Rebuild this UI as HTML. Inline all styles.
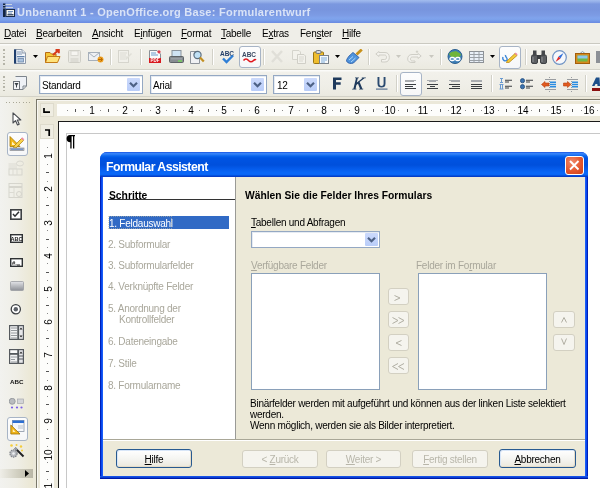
<!DOCTYPE html>
<html><head><meta charset="utf-8">
<style>
*{box-sizing:border-box}
html,body{margin:0;padding:0}
body{width:600px;height:488px;position:relative;overflow:hidden;will-change:transform;background:#fff;font-family:"Liberation Sans",sans-serif;font-size:9.5px;color:#000}
.a{position:absolute}
#title{left:0;top:0;width:600px;height:23px;background:linear-gradient(#a3bcee 0px,#92ade8 2px,#7b98df 4px,#7895de 10px,#7c9be4 15px,#80a3ec 18px,#7aa0ea 20px,#6d8fe4 22px,#6a8ae0 23px)}
#title .t{left:17px;top:6px;font-weight:bold;font-size:11px;color:#d9e3f7;white-space:nowrap;letter-spacing:0.27px}
#menu{left:0;top:23px;width:600px;height:21px;background:#efeee8;border-bottom:1px solid #cac9c1}
#menu span{position:absolute;top:5px;white-space:nowrap;font-size:10px;letter-spacing:-0.25px;color:#000}
u{text-decoration:underline;text-decoration-thickness:1px;text-underline-offset:1px}
.tb{background:linear-gradient(#fbfbf9 0px,#fbfbf9 1px,#f2f1eb 2px,#efeee7 60%,#ebeae0 calc(100% - 1px),#d3d2c8 calc(100% - 1px))}
#tb1{left:0;top:44px;width:600px;height:26px}
#tb2{left:0;top:70px;width:600px;height:27px}
.grip{position:absolute;left:3px;width:2px;background:repeating-linear-gradient(#b5b4a8 0 1.5px,transparent 1.5px 3.5px)}
.sep{position:absolute;width:2px;background:linear-gradient(90deg,#d2d1c8 0 1px,#fff 1px 2px)}
.combo{position:absolute;background:#fff;border:1px solid #94a8c3;box-shadow:inset 1px 1px #e6ebf2}
.combo .dd{position:absolute;right:2px;top:2px;width:13px;height:13px;background:linear-gradient(#cbd9fb,#b9cdf9);border-radius:1px}
.combo .dd svg{position:absolute;left:0;top:0}
#lefttb{left:0;top:97px;width:34px;height:391px;background:linear-gradient(90deg,#f2f2ef,#efeee6 50%,#ebe7d2)}
.rul i,.rul b{position:absolute;display:block}
.rul b{font-weight:normal;font-size:10px;text-align:center;line-height:10px}
.rul b.vr{transform:rotate(-90deg)}
.rul b{will-change:transform}

.dt{font-weight:bold;font-size:12.3px;letter-spacing:-0.55px;color:#fff;white-space:nowrap}
.b1{font-weight:bold;font-size:10.3px;white-space:nowrap}
.st{font-size:10px;letter-spacing:-0.25px;white-space:nowrap;line-height:11px}
.dis{color:#a9a79b}

.lb{background:#fff;border:1px solid #8aa0b9}
.btn{font-size:10px;letter-spacing:-0.25px;text-align:center;line-height:16px;border:1px solid #285a90;border-radius:3px;background:linear-gradient(#fff,#f4f4f0 55%,#ebe8dc);box-shadow:inset 1px 1px #d8e6f8,inset -1px -1px #e6dcc8;white-space:nowrap;padding-top:2px}
.dbtn{border-color:#d3d0c2;background:#f5f4ee;color:#b8b6aa;line-height:15px;box-shadow:none;padding-top:1px}


.pressed{border:1px solid #a7b4c6;border-radius:3px;background:linear-gradient(#fdfdfd,#f6f7f8)}
.ct{font-size:10px;letter-spacing:-0.25px;white-space:nowrap}
</style></head><body>

<div id="title" class="a">
  <svg class="a" style="left:3px;top:3px" width="12" height="14" viewBox="0 0 12 14">
    <rect x="0" y="0.5" width="2.5" height="13.5" fill="#13243f"/>
    <rect x="0" y="2" width="2.5" height="1" fill="#8fa3c8"/>
    <rect x="0" y="4.5" width="2.5" height="1" fill="#8fa3c8"/>
    <path d="M2.5 1.5H9M2.5 4.5H10" stroke="#c9d3e0" stroke-width="1.2"/>
    <rect x="2.5" y="6" width="9.5" height="8" fill="#1a2c4a"/>
    <rect x="3.5" y="7" width="7.5" height="6" fill="#f6f7f2"/>
    <rect x="5" y="8" width="5" height="1" fill="#6f8fbf"/>
    <rect x="5" y="9.6" width="4" height="1" fill="#6f8fbf"/>
    <rect x="4.5" y="11.2" width="6" height="1.2" fill="#1a2c4a"/>
  </svg>
  <div class="t a">Unbenannt 1 - OpenOffice.org Base: Formularentwurf</div>
</div>
<div id="menu" class="a">
  <span style="left:4px"><u>D</u>atei</span>
  <span style="left:36px"><u>B</u>earbeiten</span>
  <span style="left:92px"><u>A</u>nsicht</span>
  <span style="left:134px">E<u>i</u>nfügen</span>
  <span style="left:181px"><u>F</u>ormat</span>
  <span style="left:221px"><u>T</u>abelle</span>
  <span style="left:262px">E<u>x</u>tras</span>
  <span style="left:300px">Fen<u>s</u>ter</span>
  <span style="left:342px"><u>H</u>ilfe</span>
</div>
<div id="tb1" class="a tb">
  <div class="grip" style="top:5px;height:16px"></div>
  <!-- new -->
  <svg class="a" style="left:13px;top:5px" width="14" height="15" viewBox="0 0 14 15">
    <path d="M1.5 0.5H9L12.5 4V14.5H1.5Z" fill="#f3f7fb" stroke="#8e9aaa"/>
    <path d="M9 0.5V4H12.5" fill="#dfe6ee" stroke="#8e9aaa"/>
    <rect x="1" y="0.5" width="2.2" height="14" fill="#1f3f6e"/>
    <path d="M4 3H8M4 5H9" stroke="#7f93b0"/>
    <rect x="4" y="7" width="7.5" height="1.3" fill="#5f7fa8"/>
    <rect x="5" y="9.5" width="5.5" height="3.5" fill="#a9c2de" stroke="#6d87a8" stroke-width=".8"/>
  </svg>
  <svg class="a" style="left:33px;top:11px" width="5" height="3"><path d="M0 0H5L2.5 3Z" fill="#000"/></svg>
  <!-- open -->
  <svg class="a" style="left:45px;top:5px" width="16" height="15" viewBox="0 0 16 15">
    <path d="M0.5 3.5H5L6.5 5H11V13.5H0.5Z" fill="#f3c636" stroke="#b86a12"/>
    <path d="M2.5 7.5H15L12.5 13.5H0.5Z" fill="#ffe27a" stroke="#c47a16"/>
    <path d="M8 6L13 1.5M10.5 1H13.8V4.3" stroke="#d83a1c" stroke-width="2" fill="none"/>
  </svg>
  <!-- save disabled -->
  <svg class="a" style="left:68px;top:6px" width="13" height="13" viewBox="0 0 13 13">
    <rect x="0.5" y="0.5" width="12" height="12" rx="1" fill="#ebeae4" stroke="#cfcec6"/>
    <rect x="3" y="1" width="7" height="4.5" fill="#f6f5f1" stroke="#d4d3cc" stroke-width=".8"/>
    <rect x="2.5" y="8" width="8" height="4" fill="#dddcd5"/>
  </svg>
  <!-- mail -->
  <svg class="a" style="left:88px;top:8px" width="16" height="11" viewBox="0 0 16 11">
    <rect x="0.5" y="0.5" width="11" height="8" fill="#eef0f3" stroke="#a7b0ba"/>
    <path d="M0.5 0.5L6 5L11.5 0.5" stroke="#a7b0ba" fill="none"/>
    <circle cx="12.5" cy="7.5" r="3" fill="#f0a020"/>
    <path d="M10 7.5H14M12.5 5.5L14.5 7.5L12.5 9.5" stroke="#b86a00" fill="none"/>
  </svg>
  <div class="sep" style="left:110px;top:5px;height:16px"></div>
  <!-- edit disabled -->
  <svg class="a" style="left:118px;top:6px" width="15" height="13" viewBox="0 0 15 13">
    <rect x="0.5" y="0.5" width="10" height="12" fill="#f1f0ea" stroke="#d6d5cd"/>
    <path d="M2 3H9M2 5H8M2 7H9M2 9H7" stroke="#dddcd4"/>
    <path d="M7 9L13 3L14 4L8 10Z" fill="#e0dfd7"/>
  </svg>
  <div class="sep" style="left:140px;top:5px;height:16px"></div>
  <!-- pdf -->
  <svg class="a" style="left:149px;top:6px" width="12" height="13" viewBox="0 0 12 13">
    <path d="M0.5 0.5H8L11.5 4V12.5H0.5Z" fill="#fafafa" stroke="#8a8f96"/>
    <path d="M2 3H7M2 5H9" stroke="#6d9ccc"/>
    <rect x="0" y="8" width="12" height="5" fill="#d8191e"/>
    <text x="6" y="12.3" font-size="4.5" font-weight="bold" fill="#fff" text-anchor="middle" font-family="Liberation Sans">PDF</text>
    <circle cx="10" cy="1.8" r="1.6" fill="#e03c4c"/>
  </svg>
  <!-- print -->
  <svg class="a" style="left:169px;top:6px" width="15" height="13" viewBox="0 0 15 13">
    <rect x="3" y="0.5" width="9" height="6" fill="#cfe3f3" stroke="#8a939c"/>
    <rect x="0.5" y="6.5" width="14" height="6" rx="1" fill="#878c91" stroke="#5d6266"/>
    <rect x="2" y="8" width="11" height="1.5" fill="#9aa0a5"/>
    <rect x="9" y="10" width="4" height="2" fill="#7cc26a"/>
  </svg>
  <!-- preview -->
  <svg class="a" style="left:190px;top:6px" width="15" height="14" viewBox="0 0 15 14">
    <path d="M0.5 1.5H8L9.5 3V13.5H0.5Z" fill="#f0f1f3" stroke="#8d939a"/>
    <circle cx="7.5" cy="5" r="3.6" fill="#bfe0f5" stroke="#5d6f80" stroke-width="1.2"/>
    <path d="M10 7.5L13.8 11.5" stroke="#c28f20" stroke-width="2.2"/>
  </svg>
  <div class="sep" style="left:212px;top:5px;height:16px"></div>
  <!-- spell -->
  <svg class="a" style="left:219px;top:6px" width="16" height="14" viewBox="0 0 16 14">
    <text x="8" y="6" font-size="6.5" font-weight="bold" fill="#25406a" text-anchor="middle" font-family="Liberation Sans">ABC</text>
    <path d="M4 8.5L7.5 12L14 5.5" stroke="#2f7fd6" stroke-width="2.4" fill="none"/>
  </svg>
  <!-- auto spell pressed -->
  <div class="a pressed" style="left:239px;top:2px;width:22px;height:22px"></div>
  <svg class="a" style="left:242px;top:7px" width="15" height="12" viewBox="0 0 15 12">
    <text x="7" y="6" font-size="6.5" font-weight="bold" fill="#3a4a63" text-anchor="middle" font-family="Liberation Sans">ABC</text>
    <path d="M1.5 9.5C3 7.5 5 7.5 6.5 9.5C8 11 10 11 11.5 9.5C12.5 8.5 13.5 8.5 14 9" stroke="#e0161c" stroke-width="1.6" fill="none"/>
  </svg>
  <div class="sep" style="left:263px;top:5px;height:16px"></div>
  <!-- cut disabled -->
  <svg class="a" style="left:269px;top:6px" width="16" height="13" viewBox="0 0 16 13">
    <path d="M3 1L13 12M13 1L3 12" stroke="#e0dfd8" stroke-width="2.5"/>
  </svg>
  <!-- copy disabled -->
  <svg class="a" style="left:292px;top:6px" width="15" height="14" viewBox="0 0 15 14">
    <path d="M0.5 0.5H7L8.5 2V9.5H0.5Z" fill="#f3f2ec" stroke="#d5d4cc"/>
    <path d="M5.5 4.5H12L13.5 6V13.5H5.5Z" fill="#f3f2ec" stroke="#d0cfc7"/>
    <path d="M7 7H12M7 9H12M7 11H11" stroke="#d8d7cf"/>
  </svg>
  <!-- paste -->
  <svg class="a" style="left:313px;top:6px" width="16" height="14" viewBox="0 0 16 14">
    <rect x="0.5" y="2" width="10" height="11.5" rx="1" fill="#eebd2e" stroke="#9a7410"/>
    <rect x="3" y="0.5" width="5" height="3" rx="1.2" fill="#d5d8dc" stroke="#6c727a"/>
    <rect x="6.5" y="5.5" width="9" height="8" fill="#f7f9fb" stroke="#7a828b"/>
    <path d="M8 8H14M8 10H14M8 12H12" stroke="#7aaad8"/>
  </svg>
  <svg class="a" style="left:335px;top:11px" width="5" height="3"><path d="M0 0H5L2.5 3Z" fill="#000"/></svg>
  <!-- format paintbrush -->
  <svg class="a" style="left:346px;top:5px" width="17" height="15" viewBox="0 0 17 15">
    <path d="M10.5 5.5L15.8 0.5" stroke="#c8901a" stroke-width="2.8"/>
    <path d="M7 3.5L13 8.5L7.5 14C5 15 1.5 14.5 0.5 12C0.5 10 3 6.5 7 3.5Z" fill="#4f93dc" stroke="#2b5ea8" stroke-width=".9"/>
    <path d="M3 11L7 7.5M5 13L9.5 9" stroke="#b9dcfa" stroke-width=".9"/>
  </svg>
  <div class="sep" style="left:368px;top:5px;height:16px"></div>
  <!-- undo disabled -->
  <svg class="a" style="left:375px;top:6px" width="15" height="13" viewBox="0 0 15 13">
    <path d="M4 1.5L0.8 4L4 6.5V5H9.5C11 5 11.5 6 11.5 7.3C11.5 8.6 11 9.5 9.5 9.5H6.5V12H10C13 12 14.3 10 14.3 7.3C14.3 4.6 13 2.5 10 2.5H4Z" fill="#f3f2ed" stroke="#cfcec6"/>
  </svg>
  <svg class="a" style="left:396px;top:11px" width="5" height="3"><path d="M0 0H5L2.5 3Z" fill="#c9c8c0"/></svg>
  <!-- redo disabled -->
  <svg class="a" style="left:407px;top:6px" width="15" height="13" viewBox="0 0 15 13">
    <path d="M11 3.5L14.2 6L11 8.5V7H5.5C4 7 3.5 8 3.5 9C3.5 10 4 11 5.5 11H8V12.5H5C2 12.5 0.7 11 0.7 9C0.7 6.6 2 4.5 5 4.5H11Z" fill="#f3f2ed" stroke="#cfcec6"/>
    <path d="M10 0.5V3M8.8 1.7H11.2" stroke="#cfcec6"/>
  </svg>
  <svg class="a" style="left:429px;top:11px" width="5" height="3"><path d="M0 0H5L2.5 3Z" fill="#c9c8c0"/></svg>
  <div class="sep" style="left:440px;top:5px;height:16px"></div>
  <!-- hyperlink globe -->
  <svg class="a" style="left:447px;top:5px" width="16" height="15" viewBox="0 0 16 15">
    <circle cx="8" cy="7.5" r="7" fill="#3d7fb8" stroke="#2b5f8f"/>
    <path d="M2 5C4 2 7 3 9 2C11 4 13 3 14 6L12 8H4Z" fill="#6fb43c"/>
    <rect x="3" y="8.5" width="4.5" height="3" rx="1.5" fill="none" stroke="#fff" stroke-width="1.3"/>
    <rect x="8.5" y="8.5" width="4.5" height="3" rx="1.5" fill="none" stroke="#fff" stroke-width="1.3"/>
  </svg>
  <!-- table -->
  <svg class="a" style="left:469px;top:7px" width="15" height="12" viewBox="0 0 15 12">
    <rect x="0.5" y="0.5" width="14" height="11" fill="#e9f0f8" stroke="#8c9196"/>
    <path d="M0.5 3.5H14.5M0.5 6.5H14.5M0.5 9.5H14.5M5 0.5V11.5M10 0.5V11.5" stroke="#9aa0a6"/>
  </svg>
  <svg class="a" style="left:490px;top:11px" width="5" height="3"><path d="M0 0H5L2.5 3Z" fill="#000"/></svg>
  <!-- draw functions pressed -->
  <div class="a pressed" style="left:499px;top:2px;width:22px;height:23px"></div>
  <svg class="a" style="left:502px;top:8px" width="16" height="11" viewBox="0 0 16 11">
    <path d="M1 5C0 8 3 10 5 8C6 6 3 5 3.5 3" stroke="#3b86d8" stroke-width="1.4" fill="none"/>
    <path d="M5 9L13 1.5L15 3.5L7 10.5L4.5 10.8Z" fill="#f5cc3a" stroke="#b58516" stroke-width=".8"/>
    <path d="M12.5 1.5L13.7 0.5L15.6 2.2L14.8 3.5Z" fill="#ee8aa2"/>
  </svg>
  <div class="sep" style="left:525px;top:5px;height:16px"></div>
  <!-- find binoculars -->
  <svg class="a" style="left:531px;top:6px" width="16" height="14" viewBox="0 0 16 14">
    <rect x="0.5" y="5" width="6" height="8.5" rx="1.5" fill="#5c5f62" stroke="#3e4144"/>
    <rect x="9.5" y="5" width="6" height="8.5" rx="1.5" fill="#5c5f62" stroke="#3e4144"/>
    <rect x="2" y="0.5" width="3.5" height="5" fill="#45484b"/>
    <rect x="10.5" y="0.5" width="3.5" height="5" fill="#45484b"/>
    <rect x="6" y="5" width="4" height="4" fill="#3a3d40"/>
    <path d="M2 7V12M11 7V12" stroke="#8f9397"/>
  </svg>
  <!-- navigator -->
  <svg class="a" style="left:552px;top:6px" width="15" height="15" viewBox="0 0 15 15">
    <circle cx="7.5" cy="7.5" r="6.8" fill="#f6f8fb" stroke="#6f93c4" stroke-width="1.2"/>
    <path d="M11.5 3L8.5 8.5L6.5 6.5Z" fill="#2d6ed8"/>
    <path d="M3.5 12L6.5 6.5L8.5 8.5Z" fill="#e12828"/>
  </svg>
  <!-- gallery -->
  <svg class="a" style="left:575px;top:7px" width="15" height="13" viewBox="0 0 15 13">
    <path d="M5 2.5L7.5 0.5L10 2.5" stroke="#8aa0b6" fill="none"/>
    <rect x="0.5" y="2.5" width="14" height="10" fill="#d58a1e" stroke="#a35f0a"/>
    <rect x="2.5" y="4.5" width="10" height="6" fill="#6fb845"/>
    <rect x="2.5" y="4.5" width="10" height="3" fill="#8fc7ea"/>
  </svg>
  <svg class="a" style="left:596px;top:6px" width="4" height="14"><rect x="0" y="1" width="4" height="12" fill="#8c9096"/></svg>
</div>
<div id="tb2" class="a tb">
  <div class="grip" style="top:6px;height:16px"></div>
  <!-- styles -->
  <svg class="a" style="left:13px;top:6px" width="15" height="15" viewBox="0 0 15 15">
    <path d="M2.5 0.5H13.5V10L10 13.5H5.5" fill="#eef1f6" stroke="#7d848c"/>
    <path d="M10 13.5V10H13.5" fill="none" stroke="#7d848c"/>
    <rect x="0.5" y="5.5" width="6" height="8" fill="#f4f5f7" stroke="#6c7278"/>
    <path d="M1.5 7H5.5L4 9.5V11.5H3V9.5Z" fill="#3c4247"/>
  </svg>
  <div class="combo" style="left:39px;top:5px;width:104px;height:19px"><span class="a ct" style="left:2px;top:4px">Standard</span><div class="dd" style="top:2px;height:13px"><svg width="13" height="13"><path d="M3 4.8L6.5 8.3L10 4.8" stroke="#4d6185" stroke-width="2.2" fill="none"/></svg></div></div>
  <div class="combo" style="left:150px;top:5px;width:117px;height:19px"><span class="a ct" style="left:2px;top:4px">Arial</span><div class="dd" style="top:2px;height:13px"><svg width="13" height="13"><path d="M3 4.8L6.5 8.3L10 4.8" stroke="#4d6185" stroke-width="2.2" fill="none"/></svg></div></div>
  <div class="combo" style="left:273px;top:5px;width:47px;height:19px"><span class="a ct" style="left:3px;top:4px">12</span><div class="dd" style="top:2px;height:13px"><svg width="13" height="13"><path d="M3 4.8L6.5 8.3L10 4.8" stroke="#4d6185" stroke-width="2.2" fill="none"/></svg></div></div>
  <!-- F K U -->
  <svg class="a" style="left:333px;top:7px" width="9" height="13" viewBox="0 0 9 13"><path d="M0 0.5H8.5V3H3V5.3H7.7V7.8H3V12.5H0Z" fill="#1f3a5c"/></svg>
  <svg class="a" style="left:352px;top:7px" width="15" height="13" viewBox="0 0 15 13"><path d="M3 0.5H7L6.6 1.3H5.8L4.8 5.6L10.5 1.3H9.5L9.9 0.5H14L13.6 1.3H12.5L7.6 5L10.4 11.7H11.4L11 12.5H7L7.4 11.7H8L6 6.8L4.4 8L3.6 11.7H4.6L4.2 12.5H0L0.4 11.7H1.4L4 1.3H3Z" fill="#1f3a5c"/></svg>
  <svg class="a" style="left:376px;top:7px" width="12" height="13" viewBox="0 0 12 13"><path d="M1.5 0V6.5C1.5 9.5 3 10.5 5.5 10.5C8 10.5 9.5 9.5 9.5 6.5V0H7.6V6.5C7.6 8.2 7 8.9 5.5 8.9C4 8.9 3.4 8.2 3.4 6.5V0Z" fill="#2b4a70"/><rect x="0" y="11.5" width="11.5" height="1.2" fill="#5a7392"/></svg>
  <div class="sep" style="left:396px;top:5px;height:17px"></div>
  <!-- align -->
  <div class="a pressed" style="left:400px;top:2px;width:22px;height:24px"></div>
  <svg class="a" style="left:405px;top:10px" width="12" height="9" viewBox="0 0 12 9"><path d="M0 0.5H11M0 1.5H9" stroke="#a9acb0"/><path d="M0 4.5H11M0 6.5H8M0 8.5H11" stroke="#3a3e42" stroke-width="1.1"/></svg>
  <svg class="a" style="left:427px;top:10px" width="12" height="9" viewBox="0 0 12 9"><path d="M0 0.5H11M2 1.5H9" stroke="#a9acb0"/><path d="M0 4.5H11M3 6.5H8M0 8.5H11" stroke="#3a3e42" stroke-width="1.1"/></svg>
  <svg class="a" style="left:449px;top:10px" width="12" height="9" viewBox="0 0 12 9"><path d="M0 0.5H11M2 1.5H11" stroke="#a9acb0"/><path d="M0 4.5H11M3 6.5H11M0 8.5H11" stroke="#3a3e42" stroke-width="1.1"/></svg>
  <svg class="a" style="left:471px;top:10px" width="12" height="9" viewBox="0 0 12 9"><path d="M0 0.5H11M0 1.5H11" stroke="#a9acb0"/><path d="M0 4.5H11M0 6.5H11M0 8.5H11" stroke="#3a3e42" stroke-width="1.1"/></svg>
  <div class="sep" style="left:491px;top:5px;height:17px"></div>
  <!-- numbering -->
  <svg class="a" style="left:499px;top:8px" width="14" height="12" viewBox="0 0 14 12">
    <path d="M1 0.5H4M2.5 0.5V4.5M1 4.5H4" stroke="#6a9ad0"/>
    <path d="M0.5 6.5H4.5M1.5 6.5V11M3.5 6.5V11M0.5 11H4.5" stroke="#6a9ad0"/>
    <path d="M6 2.3H13M6 4H10M6 8.3H13M6 10H10" stroke="#3a3e42" stroke-width="1.1"/>
  </svg>
  <!-- bullets -->
  <svg class="a" style="left:520px;top:8px" width="14" height="12" viewBox="0 0 14 12">
    <circle cx="2.5" cy="2.7" r="2.1" fill="#3b73b0" stroke="#1e4a7a" stroke-width=".8"/>
    <circle cx="2.5" cy="8.7" r="2.1" fill="#3b73b0" stroke="#1e4a7a" stroke-width=".8"/>
    <path d="M6 2.3H13M6 4H10M6 8.3H13M6 10H10" stroke="#3a3e42" stroke-width="1.1"/>
  </svg>
  <!-- decrease indent -->
  <svg class="a" style="left:541px;top:7px" width="16" height="15" viewBox="0 0 16 15">
    <path d="M8.5 0V15" stroke="#9a9da0" stroke-dasharray="1 1"/>
    <path d="M4 2.5H15M4 12.5H15" stroke="#9a9da0"/>
    <path d="M9 5.2H15M9 7.5H15M9 9.8H15" stroke="#2a8ce0" stroke-width="1.4"/>
    <path d="M0.5 7.5L4 4.5V6H8V9H4V10.5Z" fill="#e05a1e" stroke="#b8400e" stroke-width=".6"/>
  </svg>
  <!-- increase indent -->
  <svg class="a" style="left:563px;top:7px" width="16" height="15" viewBox="0 0 16 15">
    <path d="M8.5 0V15" stroke="#9a9da0" stroke-dasharray="1 1"/>
    <path d="M4 2.5H15M4 12.5H15" stroke="#9a9da0"/>
    <path d="M9 5.2H15M9 7.5H15M9 9.8H15" stroke="#2a8ce0" stroke-width="1.4"/>
    <path d="M8 7.5L4.5 4.5V6H0.5V9H4.5V10.5Z" fill="#e05a1e" stroke="#b8400e" stroke-width=".6"/>
  </svg>
  <div class="sep" style="left:585px;top:5px;height:17px"></div>
  <!-- font color -->
  <svg class="a" style="left:592px;top:7px" width="8" height="14" viewBox="0 0 8 14">
    <path d="M4 0.5H7.5L8 9H5.5L5.3 7H3.5L2.5 9H0Z" fill="#1d4f8a"/>
    <rect x="0" y="11" width="8" height="3" fill="#8a1010"/>
  </svg>
</div>
<div id="lefttb" class="a">
  <div class="a" style="left:6px;top:5px;width:24px;height:1px;background:repeating-linear-gradient(90deg,#a9a797 0 1px,transparent 1px 3.3px)"></div>
  <!-- pointer -->
  <svg class="a" style="left:12px;top:15px" width="10" height="14" viewBox="0 0 10 14">
    <path d="M1 0.8V11L3.5 8.6L5.5 13L7.2 12.2L5.3 8H8.8Z" fill="#fff" stroke="#4a4d52" stroke-width="1.1" stroke-linejoin="round"/>
  </svg>
  <!-- design mode pressed -->
  <div class="a pressed" style="left:7px;top:35px;width:21px;height:24px"></div>
  <svg class="a" style="left:9px;top:39px" width="16" height="15" viewBox="0 0 16 15">
    <path d="M1 0.5L11 10.5H1Z" fill="#f1b81a" stroke="#a57a08" stroke-width=".8"/>
    <path d="M3 5.5L6.5 9H3Z" fill="#fff3c4"/>
    <path d="M5 10L12.5 2.5L14.5 4.5L7 12L4.5 12.5Z" fill="#f8d24a" stroke="#a57a08" stroke-width=".7"/>
    <path d="M12 2.5L13.2 1.3L15.3 3.3L14.2 4.6Z" fill="#ef8da4"/>
    <rect x="1" y="12" width="14" height="2.5" fill="#c3c6cc" stroke="#7a7e84" stroke-width=".6"/>
    <path d="M2 13.2H14" stroke="#3b6fc4" stroke-width=".8"/>
  </svg>
  <!-- control props disabled -->
  <svg class="a" style="left:8px;top:63px" width="16" height="16" viewBox="0 0 16 16">
    <ellipse cx="12" cy="3.5" rx="3.5" ry="2.5" fill="none" stroke="#d9d8d0"/>
    <path d="M0.5 4H9M0.5 6H9M0.5 8H9" stroke="#dcdbd3"/>
    <rect x="1" y="9" width="13" height="6" fill="none" stroke="#d6d5cd"/>
    <path d="M5 9V15M9 9V15" stroke="#dcdbd3"/>
  </svg>
  <!-- form props disabled -->
  <svg class="a" style="left:8px;top:86px" width="16" height="16" viewBox="0 0 16 16">
    <rect x="1" y="0.5" width="13" height="3" fill="none" stroke="#d6d5cd"/>
    <rect x="1" y="4.5" width="13" height="10" fill="none" stroke="#d6d5cd"/>
    <path d="M6 4.5V14.5M1 9.5H6" stroke="#dcdbd3"/>
    <circle cx="11" cy="11" r="2.5" fill="none" stroke="#d6d5cd"/>
  </svg>
  <!-- checkbox -->
  <svg class="a" style="left:10px;top:112px" width="12" height="11" viewBox="0 0 12 11">
    <rect x="0.8" y="0.8" width="10.4" height="9.4" fill="#fff" stroke="#3e4144" stroke-width="1.6"/>
    <path d="M3 5L5 7.2L9 2.8" stroke="#2d3033" stroke-width="1.5" fill="none"/>
  </svg>
  <!-- text field -->
  <svg class="a" style="left:10px;top:137px" width="13" height="9" viewBox="0 0 13 9">
    <rect x="0.7" y="0.7" width="11.6" height="7.6" fill="#fff" stroke="#2f3235" stroke-width="1.4"/>
    <text x="6.5" y="7" font-size="5.6" font-weight="bold" fill="#222" text-anchor="middle" font-family="Liberation Sans">ABC</text>
  </svg>
  <!-- formatted field -->
  <svg class="a" style="left:10px;top:161px" width="13" height="9" viewBox="0 0 13 9">
    <rect x="0.7" y="0.7" width="11.6" height="7.6" fill="#fff" stroke="#2f3235" stroke-width="1.4"/>
    <text x="2" y="7" font-size="6" font-weight="bold" fill="#222" font-family="Liberation Sans">#.</text>
    <path d="M7 7H10" stroke="#222"/>
  </svg>
  <!-- push button -->
  <svg class="a" style="left:10px;top:184px" width="14" height="10" viewBox="0 0 14 10">
    <defs><linearGradient id="pb" x1="0" y1="0" x2="0" y2="1"><stop offset="0" stop-color="#e3e4e8"/><stop offset="1" stop-color="#8d9096"/></linearGradient></defs>
    <rect x="0.5" y="0.5" width="13" height="9" rx="1" fill="url(#pb)" stroke="#9a9da2" stroke-width=".8"/>
  </svg>
  <!-- radio -->
  <svg class="a" style="left:10px;top:207px" width="12" height="11" viewBox="0 0 12 11">
    <circle cx="5.8" cy="5.3" r="4.6" fill="#fff" stroke="#3c3f43" stroke-width="1.3"/>
    <circle cx="5.8" cy="5.3" r="2.2" fill="#5c6068"/>
  </svg>
  <!-- listbox -->
  <svg class="a" style="left:9px;top:228px" width="15" height="15" viewBox="0 0 15 15">
    <rect x="0.6" y="0.6" width="8.3" height="13.8" fill="#f2f3f4" stroke="#55595e" stroke-width="1.2"/>
    <path d="M2 3H8M2 5.5H8M2 8H8M2 10.5H8M2 13H8" stroke="#8a8e94" stroke-width=".9"/>
    <rect x="9.5" y="0.6" width="4.9" height="13.8" fill="#e6e7ea" stroke="#55595e" stroke-width="1.2"/>
    <path d="M10.5 4.5L12 2.5L13.5 4.5ZM10.5 10.5L12 12.5L13.5 10.5Z" fill="#222"/>
  </svg>
  <!-- combobox -->
  <svg class="a" style="left:9px;top:252px" width="15" height="15" viewBox="0 0 15 15">
    <rect x="0.6" y="0.6" width="8.3" height="4" fill="#fafafa" stroke="#55595e" stroke-width="1.2"/>
    <rect x="0.6" y="5.2" width="8.3" height="9.2" fill="#f2f3f4" stroke="#55595e" stroke-width="1.2"/>
    <path d="M2 8H8M2 10.5H6M2 13H8" stroke="#8a8e94" stroke-width=".9"/>
    <rect x="9.5" y="0.6" width="4.9" height="13.8" fill="#e6e7ea" stroke="#55595e" stroke-width="1.2"/>
    <path d="M10.5 4.5L12 2.5L13.5 4.5Z" fill="#222"/>
    <path d="M10 7H14M10 10H14" stroke="#55595e"/>
  </svg>
  <!-- label -->
  <svg class="a" style="left:10px;top:281px" width="14" height="6" viewBox="0 0 14 6">
    <text x="6.8" y="5.5" font-size="6.2" font-weight="bold" fill="#111" text-anchor="middle" font-family="Liberation Sans">ABC</text>
  </svg>
  <!-- more controls -->
  <svg class="a" style="left:9px;top:301px" width="15" height="11" viewBox="0 0 15 11">
    <circle cx="3.2" cy="3.3" r="3" fill="#b9bbbf" stroke="#8d9095" stroke-width=".8"/>
    <rect x="8.5" y="1" width="6" height="4.5" fill="#d3d4d8" stroke="#a6a8ac" stroke-width=".7"/>
    <circle cx="3" cy="9.5" r="1.1" fill="#7a5ee6"/>
    <circle cx="8" cy="9.5" r="1.1" fill="#7a5ee6"/>
    <circle cx="12.5" cy="9.5" r="1.1" fill="#7a5ee6"/>
  </svg>
  <!-- form design pressed -->
  <div class="a pressed" style="left:7px;top:320px;width:21px;height:24px"></div>
  <svg class="a" style="left:10px;top:323px" width="15" height="15" viewBox="0 0 15 15">
    <rect x="2.5" y="0.5" width="11.5" height="11" fill="#f6f8fb" stroke="#8c97a6" stroke-width=".8"/>
    <rect x="2.5" y="0.5" width="11.5" height="2.5" fill="#2d6fd2"/>
    <path d="M8 6H13M8 8H13" stroke="#b9c2ce"/>
    <path d="M0.8 5L10 14H0.8Z" fill="#f0b419" stroke="#9e7406" stroke-width=".8"/>
    <path d="M2.8 9L5.5 12H2.8Z" fill="#fff0b8"/>
  </svg>
  <!-- wizard -->
  <svg class="a" style="left:9px;top:347px" width="16" height="14" viewBox="0 0 16 14">
    <circle cx="4.5" cy="9.5" r="3.6" fill="#b5b8bd" stroke="#80848a" stroke-width="1.2" stroke-dasharray="1.5 .8"/>
    <circle cx="4.5" cy="9.5" r="1.3" fill="#eef0f2"/>
    <path d="M6 4L14.5 12.5" stroke="#202225" stroke-width="2"/>
    <path d="M6 4L8 6" stroke="#9aa0a8" stroke-width="2"/>
    <circle cx="2.5" cy="1.5" r="1.3" fill="#f4cd3a"/>
    <circle cx="7.5" cy="1" r="1" fill="#f4cd3a"/>
    <circle cx="12" cy="2.5" r="1.2" fill="#f4cd3a"/>
    <circle cx="13" cy="6.5" r="1" fill="#f4cd3a"/>
  </svg>
  <!-- overflow -->
  <div class="a" style="left:0;top:372px;width:33px;height:9px;background:linear-gradient(90deg,#efeee8,#d0cebf 55%,#b9b6a6)"></div>
  <svg class="a" style="left:25px;top:373px" width="5" height="7"><path d="M0 0L4 3.5L0 7Z" fill="#000"/></svg>
</div>
<div class="a" style="left:33px;top:97px;width:567px;height:391px;background:#ebe8d9"></div>
<div class="a" style="left:36px;top:99px;width:564px;height:1px;background:#7a786a"></div>
<div class="a" style="left:36px;top:99px;width:1px;height:389px;background:#7a786a"></div>
<div class="a" style="left:37px;top:100px;width:563px;height:1px;background:#f8f7f2"></div>
<div class="a" style="left:37px;top:100px;width:1px;height:388px;background:#f8f7f2"></div>
<div class="a" style="left:40px;top:103px;width:14px;height:14px;background:#efede2;border:1px solid #dedbcc"></div>
<svg class="a" style="left:43px;top:108px" width="8" height="6"><path d="M1 0V4.2H7" stroke="#000" stroke-width="1.7" fill="none"/></svg>
<div class="a" style="left:40px;top:124px;width:14px;height:15px;background:#efede2;border:1px solid #dedbcc"></div>
<svg class="a" style="left:44px;top:129px" width="7" height="7"><path d="M1 1H5.2V7" stroke="#000" stroke-width="1.7" fill="none"/></svg>
<div class="a" style="left:57px;top:104px;width:543px;height:12px;background:#fdfdfb"></div>
<div class="a" style="left:40px;top:139px;width:14px;height:349px;background:#fdfdfb"></div>
<div id="hr" class="rul"><i style="left:67px;top:110px;width:1px;height:1px;background:#8a8a8a"></i>
<i style="left:75px;top:109px;width:1px;height:3px;background:#555"></i>
<i style="left:83px;top:110px;width:1px;height:1px;background:#8a8a8a"></i>
<i style="left:100px;top:110px;width:1px;height:1px;background:#8a8a8a"></i>
<i style="left:108px;top:109px;width:1px;height:3px;background:#555"></i>
<i style="left:117px;top:110px;width:1px;height:1px;background:#8a8a8a"></i>
<b style="left:81.7px;top:106px;width:20px">1</b>
<i style="left:133px;top:110px;width:1px;height:1px;background:#8a8a8a"></i>
<i style="left:141px;top:109px;width:1px;height:3px;background:#555"></i>
<i style="left:150px;top:110px;width:1px;height:1px;background:#8a8a8a"></i>
<b style="left:114.8px;top:106px;width:20px">2</b>
<i style="left:166px;top:110px;width:1px;height:1px;background:#8a8a8a"></i>
<i style="left:175px;top:109px;width:1px;height:3px;background:#555"></i>
<i style="left:183px;top:110px;width:1px;height:1px;background:#8a8a8a"></i>
<b style="left:147.9px;top:106px;width:20px">3</b>
<i style="left:199px;top:110px;width:1px;height:1px;background:#8a8a8a"></i>
<i style="left:208px;top:109px;width:1px;height:3px;background:#555"></i>
<i style="left:216px;top:110px;width:1px;height:1px;background:#8a8a8a"></i>
<b style="left:181.1px;top:106px;width:20px">4</b>
<i style="left:233px;top:110px;width:1px;height:1px;background:#8a8a8a"></i>
<i style="left:241px;top:109px;width:1px;height:3px;background:#555"></i>
<i style="left:249px;top:110px;width:1px;height:1px;background:#8a8a8a"></i>
<b style="left:214.2px;top:106px;width:20px">5</b>
<i style="left:266px;top:110px;width:1px;height:1px;background:#8a8a8a"></i>
<i style="left:274px;top:109px;width:1px;height:3px;background:#555"></i>
<i style="left:282px;top:110px;width:1px;height:1px;background:#8a8a8a"></i>
<b style="left:247.4px;top:106px;width:20px">6</b>
<i style="left:299px;top:110px;width:1px;height:1px;background:#8a8a8a"></i>
<i style="left:307px;top:109px;width:1px;height:3px;background:#555"></i>
<i style="left:315px;top:110px;width:1px;height:1px;background:#8a8a8a"></i>
<b style="left:280.5px;top:106px;width:20px">7</b>
<i style="left:332px;top:110px;width:1px;height:1px;background:#8a8a8a"></i>
<i style="left:340px;top:109px;width:1px;height:3px;background:#555"></i>
<i style="left:349px;top:110px;width:1px;height:1px;background:#8a8a8a"></i>
<b style="left:313.7px;top:106px;width:20px">8</b>
<i style="left:365px;top:110px;width:1px;height:1px;background:#8a8a8a"></i>
<i style="left:373px;top:109px;width:1px;height:3px;background:#555"></i>
<i style="left:382px;top:110px;width:1px;height:1px;background:#8a8a8a"></i>
<b style="left:346.8px;top:106px;width:20px">9</b>
<i style="left:398px;top:110px;width:1px;height:1px;background:#8a8a8a"></i>
<i style="left:407px;top:109px;width:1px;height:3px;background:#555"></i>
<i style="left:415px;top:110px;width:1px;height:1px;background:#8a8a8a"></i>
<b style="left:380.0px;top:106px;width:20px">10</b>
<i style="left:431px;top:110px;width:1px;height:1px;background:#8a8a8a"></i>
<i style="left:440px;top:109px;width:1px;height:3px;background:#555"></i>
<i style="left:448px;top:110px;width:1px;height:1px;background:#8a8a8a"></i>
<b style="left:413.1px;top:106px;width:20px">11</b>
<i style="left:465px;top:110px;width:1px;height:1px;background:#8a8a8a"></i>
<i style="left:473px;top:109px;width:1px;height:3px;background:#555"></i>
<i style="left:481px;top:110px;width:1px;height:1px;background:#8a8a8a"></i>
<b style="left:446.3px;top:106px;width:20px">12</b>
<i style="left:498px;top:110px;width:1px;height:1px;background:#8a8a8a"></i>
<i style="left:506px;top:109px;width:1px;height:3px;background:#555"></i>
<i style="left:514px;top:110px;width:1px;height:1px;background:#8a8a8a"></i>
<b style="left:479.4px;top:106px;width:20px">13</b>
<i style="left:531px;top:110px;width:1px;height:1px;background:#8a8a8a"></i>
<i style="left:539px;top:109px;width:1px;height:3px;background:#555"></i>
<i style="left:547px;top:110px;width:1px;height:1px;background:#8a8a8a"></i>
<b style="left:512.6px;top:106px;width:20px">14</b>
<i style="left:564px;top:110px;width:1px;height:1px;background:#8a8a8a"></i>
<i style="left:572px;top:109px;width:1px;height:3px;background:#555"></i>
<i style="left:581px;top:110px;width:1px;height:1px;background:#8a8a8a"></i>
<b style="left:545.8px;top:106px;width:20px">15</b>
<i style="left:597px;top:110px;width:1px;height:1px;background:#8a8a8a"></i>
<b style="left:578.9px;top:106px;width:20px">16</b></div>
<div id="vr" class="rul">
<i style="left:47px;top:147px;width:1px;height:1px;background:#8a8a8a"></i>
<i style="left:47px;top:164px;width:1px;height:1px;background:#8a8a8a"></i>
<i style="left:46px;top:172px;width:3px;height:1px;background:#555"></i>
<i style="left:47px;top:181px;width:1px;height:1px;background:#8a8a8a"></i>
<b class="vr" style="left:39px;top:151.3px;width:20px">1</b>
<i style="left:47px;top:197px;width:1px;height:1px;background:#8a8a8a"></i>
<i style="left:46px;top:205px;width:3px;height:1px;background:#555"></i>
<i style="left:47px;top:214px;width:1px;height:1px;background:#8a8a8a"></i>
<b class="vr" style="left:39px;top:184.4px;width:20px">2</b>
<i style="left:47px;top:230px;width:1px;height:1px;background:#8a8a8a"></i>
<i style="left:46px;top:239px;width:3px;height:1px;background:#555"></i>
<i style="left:47px;top:247px;width:1px;height:1px;background:#8a8a8a"></i>
<b class="vr" style="left:39px;top:217.5px;width:20px">3</b>
<i style="left:47px;top:263px;width:1px;height:1px;background:#8a8a8a"></i>
<i style="left:46px;top:272px;width:3px;height:1px;background:#555"></i>
<i style="left:47px;top:280px;width:1px;height:1px;background:#8a8a8a"></i>
<b class="vr" style="left:39px;top:250.7px;width:20px">4</b>
<i style="left:47px;top:297px;width:1px;height:1px;background:#8a8a8a"></i>
<i style="left:46px;top:305px;width:3px;height:1px;background:#555"></i>
<i style="left:47px;top:313px;width:1px;height:1px;background:#8a8a8a"></i>
<b class="vr" style="left:39px;top:283.9px;width:20px">5</b>
<i style="left:47px;top:330px;width:1px;height:1px;background:#8a8a8a"></i>
<i style="left:46px;top:338px;width:3px;height:1px;background:#555"></i>
<i style="left:47px;top:346px;width:1px;height:1px;background:#8a8a8a"></i>
<b class="vr" style="left:39px;top:317.0px;width:20px">6</b>
<i style="left:47px;top:363px;width:1px;height:1px;background:#8a8a8a"></i>
<i style="left:46px;top:371px;width:3px;height:1px;background:#555"></i>
<i style="left:47px;top:380px;width:1px;height:1px;background:#8a8a8a"></i>
<b class="vr" style="left:39px;top:350.1px;width:20px">7</b>
<i style="left:47px;top:396px;width:1px;height:1px;background:#8a8a8a"></i>
<i style="left:46px;top:404px;width:3px;height:1px;background:#555"></i>
<i style="left:47px;top:413px;width:1px;height:1px;background:#8a8a8a"></i>
<b class="vr" style="left:39px;top:383.3px;width:20px">8</b>
<i style="left:47px;top:429px;width:1px;height:1px;background:#8a8a8a"></i>
<i style="left:46px;top:438px;width:3px;height:1px;background:#555"></i>
<i style="left:47px;top:446px;width:1px;height:1px;background:#8a8a8a"></i>
<b class="vr" style="left:39px;top:416.4px;width:20px">9</b>
<i style="left:47px;top:462px;width:1px;height:1px;background:#8a8a8a"></i>
<i style="left:46px;top:471px;width:3px;height:1px;background:#555"></i>
<i style="left:47px;top:479px;width:1px;height:1px;background:#8a8a8a"></i>
<b class="vr" style="left:39px;top:449.6px;width:20px">10</b>
<b class="vr" style="left:39px;top:482.7px;width:20px">11</b></div>
<div class="a" style="left:58px;top:121px;width:542px;height:367px;background:#fff;border-left:1px solid #1a1a1a;border-top:1px solid #1a1a1a"></div>
<div class="a" style="left:66px;top:133px;width:534px;height:1px;background:#c8c8c8"></div>
<div class="a" style="left:66px;top:133px;width:1px;height:355px;background:#c8c8c8"></div>
<svg class="a" style="left:66px;top:135px" width="9" height="14" viewBox="0 0 9 14"><path d="M4 0H9V1.3H8.3V13.5H7V1.3H5.6V13.5H4.3V7.3C1.8 7.3 0.6 5.8 0.6 3.7C0.6 1.5 1.8 0 4 0Z" fill="#000"/></svg>


<div id="dlg" class="a" style="left:100px;top:152px;width:488px;height:327px;border-radius:7px 7px 0 0;background:#0a3bd6"></div>
<div class="a" style="left:100px;top:152px;width:488px;height:25px;border-radius:7px 7px 0 0;background:linear-gradient(#0b3fd8 0px,#3a87fb 1px,#2a7af5 2.5px,#0866ee 4px,#0054e3 6px,#0050dc 13px,#055cec 17px,#0a68f8 21px,#0864f4 23px,#0040c8 24px,#0a3ac8 25px)"></div>
<div class="a" style="left:100px;top:177px;width:3px;height:302px;background:linear-gradient(90deg,#0020b8 0 1px,#0848ee 1px 2px,#1a5cf6 2px)"></div>
<div class="a" style="left:585px;top:177px;width:3px;height:302px;background:linear-gradient(90deg,#1a5cf6 0 1px,#0848ee 1px 2px,#0020b8 2px)"></div>
<div class="a" style="left:100px;top:476px;width:488px;height:3px;background:linear-gradient(#1752e8 0 1px,#0a3fd0 1px 2px,#0019a8 2px)"></div>
<div class="a dt" style="left:106px;top:160px">Formular Assistent</div>
<div class="a" style="left:565px;top:156px;width:19px;height:19px;border:1px solid #fff;border-radius:3px;background:radial-gradient(circle at 35% 30%,#f08a6a,#e4572e 55%,#c8401c)"></div>
<svg class="a" style="left:565px;top:156px" width="19" height="19"><path d="M5 5L13.5 13.5M13.5 5L5 13.5" stroke="#fff" stroke-width="1.9"/></svg>
<div class="a" style="left:103px;top:177px;width:482px;height:299px;background:#ece9d8"></div>
<div class="a" style="left:103px;top:177px;width:132px;height:263px;background:#fff"></div>
<div class="a" style="left:235px;top:177px;width:1px;height:263px;background:#9a9a96"></div>
<div class="a" style="left:103px;top:439px;width:482px;height:1px;background:#a9a797"></div>
<div class="a" style="left:103px;top:440px;width:482px;height:1px;background:#fff"></div>
<div class="a" style="left:108px;top:199px;width:127px;height:1px;background:#333"></div>
<div class="a b1" style="left:109px;top:190px">Schritte</div>
<div class="a" style="left:109px;top:216px;width:120px;height:13px;background:#316ac5"></div>
<div class="a st" style="left:109px;top:218px;color:#fff">1. Feldauswahl</div>
<div class="a" style="left:108px;top:216px;width:64px;height:13px;outline:1px dotted rgba(200,190,150,.55);outline-offset:-1px"></div>
<div class="a st dis" style="left:108px;top:239px">2. Subformular</div>
<div class="a st dis" style="left:108px;top:260px">3. Subformularfelder</div>
<div class="a st dis" style="left:108px;top:281px">4. Verknüpfte Felder</div>
<div class="a st dis" style="left:108px;top:303px">5. Anordnung der</div>
<div class="a st dis" style="left:119px;top:314px">Kontrollfelder</div>
<div class="a st dis" style="left:108px;top:336px">6. Dateneingabe</div>
<div class="a st dis" style="left:108px;top:358px">7. Stile</div>
<div class="a st dis" style="left:108px;top:380px">8. Formularname</div>
<div class="a b1" style="left:245px;top:190px">Wählen Sie die Felder Ihres Formulars</div>
<div class="a st" style="left:251px;top:217px"><u>T</u>abellen und Abfragen</div>
<div class="combo" style="left:251px;top:231px;width:129px;height:17px"><div class="dd" style="right:1px;top:1px;height:13px"><svg width="13" height="13"><path d="M3 4.8L6.5 8.3L10 4.8" stroke="#4d6185" stroke-width="2.2" fill="none"/></svg></div></div>
<div class="a st dis" style="left:251px;top:260px"><u class="ud">V</u>erfügbare Felder</div>
<div class="a lb" style="left:251px;top:273px;width:129px;height:117px"></div>
<div class="a st dis" style="left:416px;top:260px">Felder im Fo<u class="ud">r</u>mular</div>
<div class="a lb" style="left:418px;top:273px;width:129px;height:117px"></div>
<div class="a btn dbtn" style="left:388px;top:288px;width:21px;height:17px"></div>
<svg class="a" style="left:394px;top:295px" width="7" height="6"><path d="M0.5 0.5L6 3L0.5 5.5" stroke="#b0aea2" fill="none"/></svg>
<div class="a btn dbtn" style="left:388px;top:311px;width:21px;height:17px"></div>
<svg class="a" style="left:392px;top:317px" width="13" height="7"><path d="M0.5 0.5L6 3.5L0.5 6.5M6.5 0.5L12 3.5L6.5 6.5" stroke="#b0aea2" fill="none"/></svg>
<div class="a btn dbtn" style="left:388px;top:334px;width:21px;height:17px"></div>
<svg class="a" style="left:395px;top:340px" width="7" height="6"><path d="M6.5 0.5L1 3L6.5 5.5" stroke="#b0aea2" fill="none"/></svg>
<div class="a btn dbtn" style="left:388px;top:357px;width:21px;height:17px"></div>
<svg class="a" style="left:392px;top:363px" width="13" height="7"><path d="M6 0.5L0.5 3.5L6 6.5M12 0.5L6.5 3.5L12 6.5" stroke="#b0aea2" fill="none"/></svg>
<div class="a btn dbtn" style="left:553px;top:311px;width:22px;height:17px"></div>
<svg class="a" style="left:561px;top:317px" width="6" height="6"><path d="M0.5 5.5L3 0.5L5.5 5.5" stroke="#b0aea2" fill="none"/></svg>
<div class="a btn dbtn" style="left:553px;top:334px;width:22px;height:17px"></div>
<svg class="a" style="left:561px;top:338px" width="6" height="7"><path d="M0.5 0.5L3 6.5L5.5 0.5" stroke="#b0aea2" fill="none"/></svg>
<div class="a st" style="left:250px;top:398px;line-height:11.2px">Binärfelder werden mit aufgeführt und können aus der linken Liste selektiert<br>werden.<br>Wenn möglich, werden sie als Bilder interpretiert.</div>
<div class="a btn" style="left:116px;top:449px;width:76px;height:19px"><u>H</u>ilfe</div>
<div class="a btn dbtn" style="left:242px;top:450px;width:76px;height:18px">&lt; <u class="ud">Z</u>urück</div>
<div class="a btn dbtn" style="left:326px;top:450px;width:75px;height:18px"><u class="ud">W</u>eiter &gt;</div>
<div class="a btn dbtn" style="left:412px;top:450px;width:76px;height:18px"><u class="ud">F</u>ertig stellen</div>
<div class="a btn" style="left:499px;top:449px;width:77px;height:19px"><u>A</u>bbrechen</div>

</body></html>
